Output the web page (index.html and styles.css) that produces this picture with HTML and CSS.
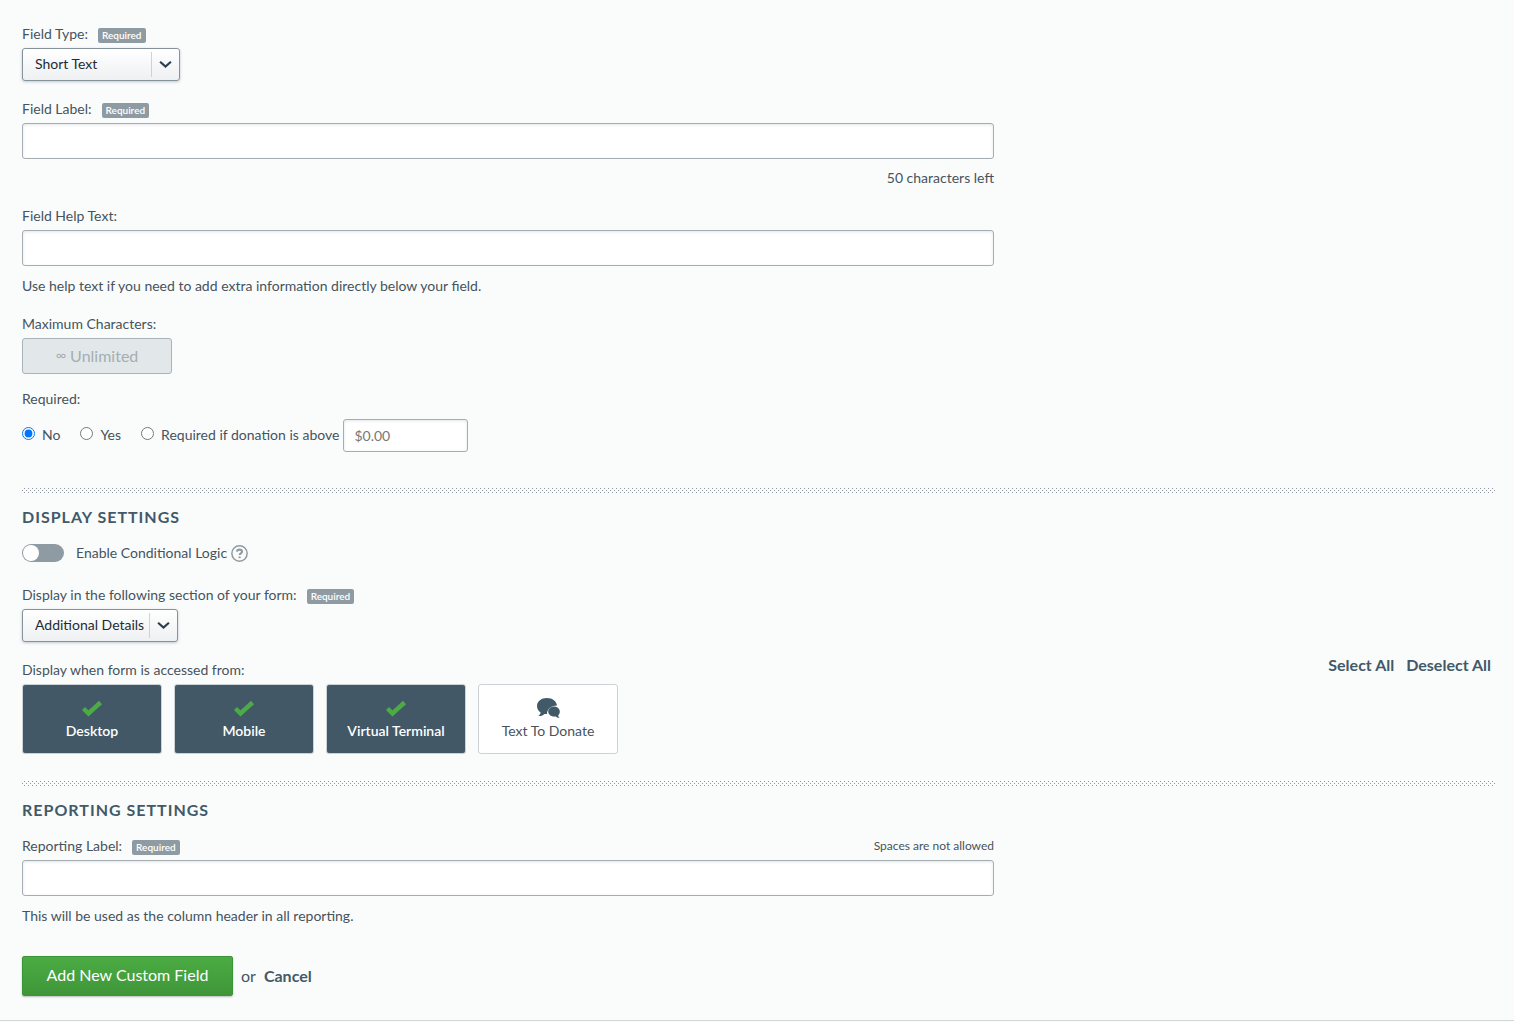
FILE: index.html
```html
<!DOCTYPE html>
<html lang="en">
<head>
<meta charset="utf-8">
<title>Add Custom Field</title>
<link rel="stylesheet" href="styles.css">
</head>
<body>
<form class="form">
  <section class="section">
    <div class="field">
      <div class="label-row"><label for="type">Field Type:</label><span class="tag">Required</span></div>
      <div class="select select-type">
        <select id="type"><option>Short Text</option></select>
        <svg class="chevron" viewBox="0 0 12 8" aria-hidden="true"><path d="M1 1.500 6 6l5-4.500"/></svg>
      </div>
    </div>
    <div class="field column">
      <div class="label-row"><label for="label">Field Label:</label><span class="tag">Required</span></div>
      <input class="text" id="label" type="text" maxlength="50">
      <p class="note counter">50 characters left</p>
    </div>
    <div class="field column">
      <div class="label-row"><label for="help">Field Help Text:</label></div>
      <input class="text" id="help" type="text">
      <p class="note">Use help text if you need to add extra information directly below your field.</p>
    </div>
    <div class="field max-field">
      <div class="label-row"><label for="max">Maximum Characters:</label></div>
      <button class="unlimited" id="max" type="button" disabled><span class="infinity">∞</span> Unlimited</button>
    </div>
    <fieldset class="required-field">
      <legend>Required:</legend>
      <div class="radios">
        <label class="radio"><input type="radio" name="req" checked>No</label>
        <label class="radio"><input type="radio" name="req">Yes</label>
        <label class="radio"><input type="radio" name="req">Required if donation is above</label>
        <input class="text amount" type="text" placeholder="$0.00" aria-label="Donation amount">
      </div>
    </fieldset>
  </section>

  <section class="section divided">
    <h2>Display Settings</h2>
    <div class="toggle-row">
      <input class="toggle" id="logic" type="checkbox">
      <label for="logic">Enable Conditional Logic</label>
      <svg class="help" viewBox="0 0 16 16" aria-hidden="true"><circle cx="8" cy="8" r="7.200"/><path class="mark" d="M5.600 6.200C5.800 3.700 10.500 3.700 10.400 6.300C10.300 7.900 8.100 7.700 8.100 9.500"/><path class="mark" d="M8.100 10.800v1.600"/></svg>
    </div>
    <div class="field">
      <div class="label-row"><label for="place">Display in the following section of your form:</label><span class="tag">Required</span></div>
      <div class="select select-place">
        <select id="place"><option>Additional Details</option></select>
        <svg class="chevron" viewBox="0 0 12 8" aria-hidden="true"><path d="M1 1.500 6 6l5-4.500"/></svg>
      </div>
    </div>
    <div class="access-head">
      <span>Display when form is accessed from:</span>
      <span class="links"><a href="#">Select All</a><a href="#">Deselect All</a></span>
    </div>
    <div class="cards">
      <button class="card selected" type="button"><svg class="icon" viewBox="0 0 24 22" aria-hidden="true"><path class="check" d="M3.500 11.500l5 5L20.500 5.500"/></svg>Desktop</button>
      <button class="card selected" type="button"><svg class="icon" viewBox="0 0 24 22" aria-hidden="true"><path class="check" d="M3.500 11.500l5 5L20.500 5.500"/></svg>Mobile</button>
      <button class="card selected" type="button"><svg class="icon" viewBox="0 0 24 22" aria-hidden="true"><path class="check" d="M3.500 11.500l5 5L20.500 5.500"/></svg>Virtual Terminal</button>
      <button class="card" type="button"><svg class="icon" viewBox="0 0 24 22" aria-hidden="true"><path class="bubble" d="M11 1C5.300 1 1 4.500 1 9c0 2.800 1.400 5 3.600 6.400C4.500 17 3.600 18 2.300 18.900c2.600.300 4.900-.600 6.300-2 .8.200 1.600.200 2.400.200C11 12.300 14.500 8.600 21 8.600 20.600 4.400 16.500 1 11 1z"/><path class="bubble" d="M18 9.600c-3.200 0-5.800 2.200-5.800 5s2.600 5 5.800 5c.6 0 1.200-.1 1.700-.200.9 1 2.300 1.500 3.900 1.400-.8-.7-1.300-1.400-1.400-2.400 1-.9 1.600-2.200 1.600-3.800 0-2.800-2.600-5-5.800-5z"/></svg>Text To Donate</button>
    </div>
  </section>

  <section class="section divided">
    <h2>Reporting Settings</h2>
    <div class="column">
      <div class="label-row"><label for="report">Reporting Label:</label><span class="tag">Required</span><span class="hint">Spaces are not allowed</span></div>
      <input class="text" id="report" type="text">
      <p class="note">This will be used as the column header in all reporting.</p>
    </div>
  </section>

  <div class="actions">
    <button class="submit" type="submit">Add New Custom Field</button>
    <span>or</span>
    <a href="#">Cancel</a>
  </div>
</form>
</body>
</html>
```
FILE: styles.css
```css
* { box-sizing: border-box; }

body {
  margin: 0;
  background: #fafcfc;
  color: #46535d;
  font: 14px/20px Lato, "Open Sans", sans-serif;
}

button, input, select { font: inherit; color: inherit; }
h2, p, fieldset, legend { margin: 0; padding: 0; }

.form { padding: 24px 18px 24px 22px; border-bottom: 1px solid #d3d7d9; }
.column { width: 66%; max-width: 972px; }
.field { margin-bottom: 18px; }
.max-field { margin-bottom: 15px; }

.label-row { display: flex; align-items: center; height: 20px; margin-bottom: 4px; }

.tag {
  margin: 2px 0 0 10px;
  padding: 0 4px;
  border-radius: 2px;
  background: #8e9ba3;
  color: #fff;
  font-size: 10px;
  font-weight: 600;
  line-height: 15px;
}

.hint { margin-left: auto; font-size: 12px; }

.select { position: relative; height: 33px; }
.select-type { width: 158px; }
.select-place { width: 156px; }

.select select {
  appearance: none;
  width: 100%;
  height: 33px;
  padding: 0 30px 2px 12px;
  border: 1px solid #84929b;
  border-radius: 3px;
  background: linear-gradient(#fff, #eef0f2);
  box-shadow: 0 1px 3px rgba(60, 80, 90, .3);
  color: #1f2b33;
}

.select::after {
  content: "";
  position: absolute;
  top: 4px;
  right: 28px;
  width: 1px;
  height: 25px;
  background: #cdd2d5;
}

.chevron {
  position: absolute;
  top: 12px;
  right: 8px;
  width: 13px;
  height: 9px;
  fill: none;
  stroke: #2c3e4b;
  stroke-width: 2;
  pointer-events: none;
}

.text {
  display: block;
  width: 100%;
  height: 36px;
  padding: 0 10px;
  border: 1px solid #a5adb3;
  border-radius: 3px;
  background: #fff;
  box-shadow: inset 0 1px 3px rgba(60, 80, 90, .15);
}

.note { margin-top: 10px; }
.counter { margin-top: 9px; text-align: right; }

.unlimited {
  display: block;
  width: 150px;
  height: 36px;
  padding: 0 0 2px;
  border: 1px solid #a9b3b9;
  border-radius: 3px;
  background: #e2e7e9;
  color: #a5aeb3;
  font-size: 16px;
}

.infinity { font-size: 14px; vertical-align: 2px; }

.required-field { border: 0; min-width: 0; }
.required-field legend { margin-bottom: 10px; }
.radios { display: flex; align-items: center; }
.radio { display: flex; align-items: center; margin: 0 20px 1px 0; }
.radio input { width: 13px; height: 13px; margin: 0 7px 3px 0; }
.radio:nth-child(3) { margin-right: 4px; }
.amount { width: 125px; height: 33px; padding-bottom: 1px; }
.amount::placeholder { color: #777; }

.divided::before {
  content: "";
  display: block;
  height: 5px;
  margin-bottom: 14px;
  background:
    linear-gradient(#8f989e, #8f989e) 0 2px / 1px 1px no-repeat,
    conic-gradient(from 0deg at 1px 1px, transparent 75%, #8f989e 0) 0 2px / 4px 4px,
    conic-gradient(from 0deg at 1px 1px, transparent 75%, #8f989e 0) 2px 0 / 4px 4px;
}

.section + .divided { margin-top: 36px; }
.divided + .divided { margin-top: 27px; }

h2 {
  margin-bottom: 16px;
  color: #425968;
  font-size: 16px;
  font-weight: 700;
  line-height: 20px;
  letter-spacing: 1px;
  text-transform: uppercase;
}

.toggle-row { display: flex; align-items: center; height: 20px; margin-bottom: 22px; }

.toggle {
  appearance: none;
  width: 42px;
  height: 18px;
  margin: 0 12px 0 0;
  padding: 1px;
  border-radius: 9px;
  background: #8e9ba3;
}

.toggle::before {
  content: "";
  display: block;
  width: 16px;
  height: 16px;
  border-radius: 50%;
  background: #fff;
}

.toggle:checked::before { margin-left: auto; }

.help { width: 17px; height: 17px; margin-left: 4px; fill: none; stroke: #8e9ba3; stroke-width: 1.4; }
.help .mark { stroke-width: 2; }

.access-head { display: flex; justify-content: space-between; height: 20px; margin-bottom: 4px; }
.links { display: flex; gap: 12px; margin: -5px 5px 0 0; }
a { color: #425968; font-size: 16px; font-weight: 700; text-decoration: none; }

.cards { display: flex; flex-wrap: wrap; gap: 12px; }

.card {
  display: flex;
  flex-direction: column;
  align-items: center;
  width: 140px;
  height: 70px;
  padding: 12px 0 0;
  border: 1px solid #ccd3d7;
  border-radius: 3px;
  background: #fff;
}

.selected { background: #435867; color: #fff; font-weight: 600; }
.icon { width: 24px; height: 22px; margin-bottom: 2px; }
.check { fill: none; stroke: #4cab46; stroke-width: 4.5; }
.bubble { fill: #425968; }

.actions { display: flex; align-items: center; gap: 8px; margin-top: 30px; font-size: 16px; }

.submit {
  width: 211px;
  height: 40px;
  padding: 0 0 2px;
  border: 1px solid #3d9438;
  border-radius: 2px;
  background: linear-gradient(#4bac43, #3f9639);
  box-shadow: 0 1px 2px rgba(0, 0, 0, .25);
  color: #fff;
  font-size: 16px;
}
```
